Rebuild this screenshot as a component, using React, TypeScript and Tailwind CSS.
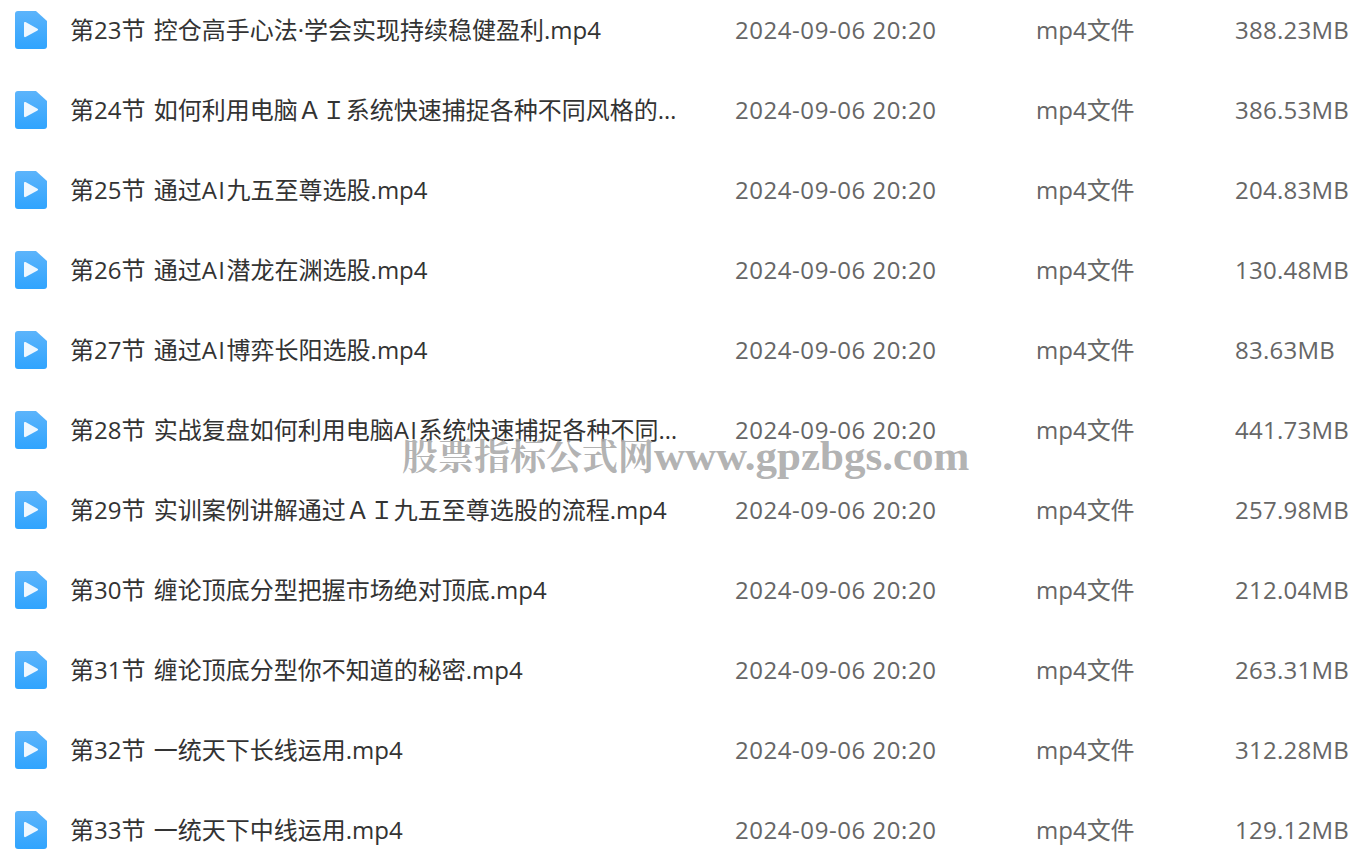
const rows: [string, string][] = [
  ["第23节 控仓高手心法·学会实现持续稳健盈利.mp4", "388.23MB"],
  ["第24节 如何利用电脑ＡＩ系统快速捕捉各种不同风格的牛股技巧.mp4", "386.53MB"],
  ["第25节 通过AI九五至尊选股.mp4", "204.83MB"],
  ["第26节 通过AI潜龙在渊选股.mp4", "130.48MB"],
  ["第27节 通过AI博弈长阳选股.mp4", "83.63MB"],
  ["第28节 实战复盘如何利用电脑AI系统快速捕捉各种不同风格牛股.mp4", "441.73MB"],
  ["第29节 实训案例讲解通过ＡＩ九五至尊选股的流程.mp4", "257.98MB"],
  ["第30节 缠论顶底分型把握市场绝对顶底.mp4", "212.04MB"],
  ["第31节 缠论顶底分型你不知道的秘密.mp4", "263.31MB"],
  ["第32节 一统天下长线运用.mp4", "312.28MB"],
  ["第33节 一统天下中线运用.mp4", "129.12MB"],
];

function VideoIcon() {
  return (
    <svg width="32" height="38" viewBox="0 0 32 38" className="shrink-0">
      <defs>
        <linearGradient id="fileBlue" x1="0" y1="0" x2="0" y2="1">
          <stop offset="0" stopColor="#5cb4fb" />
          <stop offset="1" stopColor="#30a4fe" />
        </linearGradient>
      </defs>
      <path d="M3 0H21L32 10V35a3 3 0 0 1-3 3H3a3 3 0 0 1-3-3V3a3 3 0 0 1 3-3Z" fill="url(#fileBlue)" />
      <path d="M9 12a1 1 0 0 1 1.5-.9l12 6.6a1 1 0 0 1 0 1.7l-12 6.6a1 1 0 0 1-1.5-.9Z" fill="#eef7ff" />
    </svg>
  );
}

function Title({ text }: { text: string }) {
  const parts = text.split("AI");
  if (parts.length === 1) return <>{text}</>;
  return (
    <>
      {parts[0]}
      <span className="tracking-[1.5px]">AI</span>
      {parts[1]}
    </>
  );
}

export default function App() {
  return (
    <div className="relative h-[854px] w-[1364px] overflow-hidden bg-white font-['Open_Sans','Noto_Sans_CJK_SC',sans-serif] text-2xl">
      <div className="-mt-[10px] flex flex-col">
        {rows.map(([name, size]) => (
          <div key={name} className="flex h-20 items-center pl-[15px]">
            <VideoIcon />
            <div className="ml-[23px] w-[609px] truncate text-[#333333] [word-spacing:2px]">
              <Title text={name} />
            </div>
            <div className="ml-14 w-[301px] tracking-[0.55px] text-[#666666]">2024-09-06 20:20</div>
            <div className="w-[199px] text-[#666666]">mp4文件</div>
            <div className="tracking-[0.25px] text-[#666666]">{size}</div>
          </div>
        ))}
      </div>
      <div className="absolute left-[402px] top-[432px] whitespace-nowrap font-['Liberation_Serif','Noto_Serif_CJK_SC','Noto_Sans_CJK_SC',serif] text-4xl font-bold text-[#a9a9a9]/90">
        股票指标公式网<span className="text-[43px]">www.gpzbgs.com</span>
      </div>
    </div>
  );
}
